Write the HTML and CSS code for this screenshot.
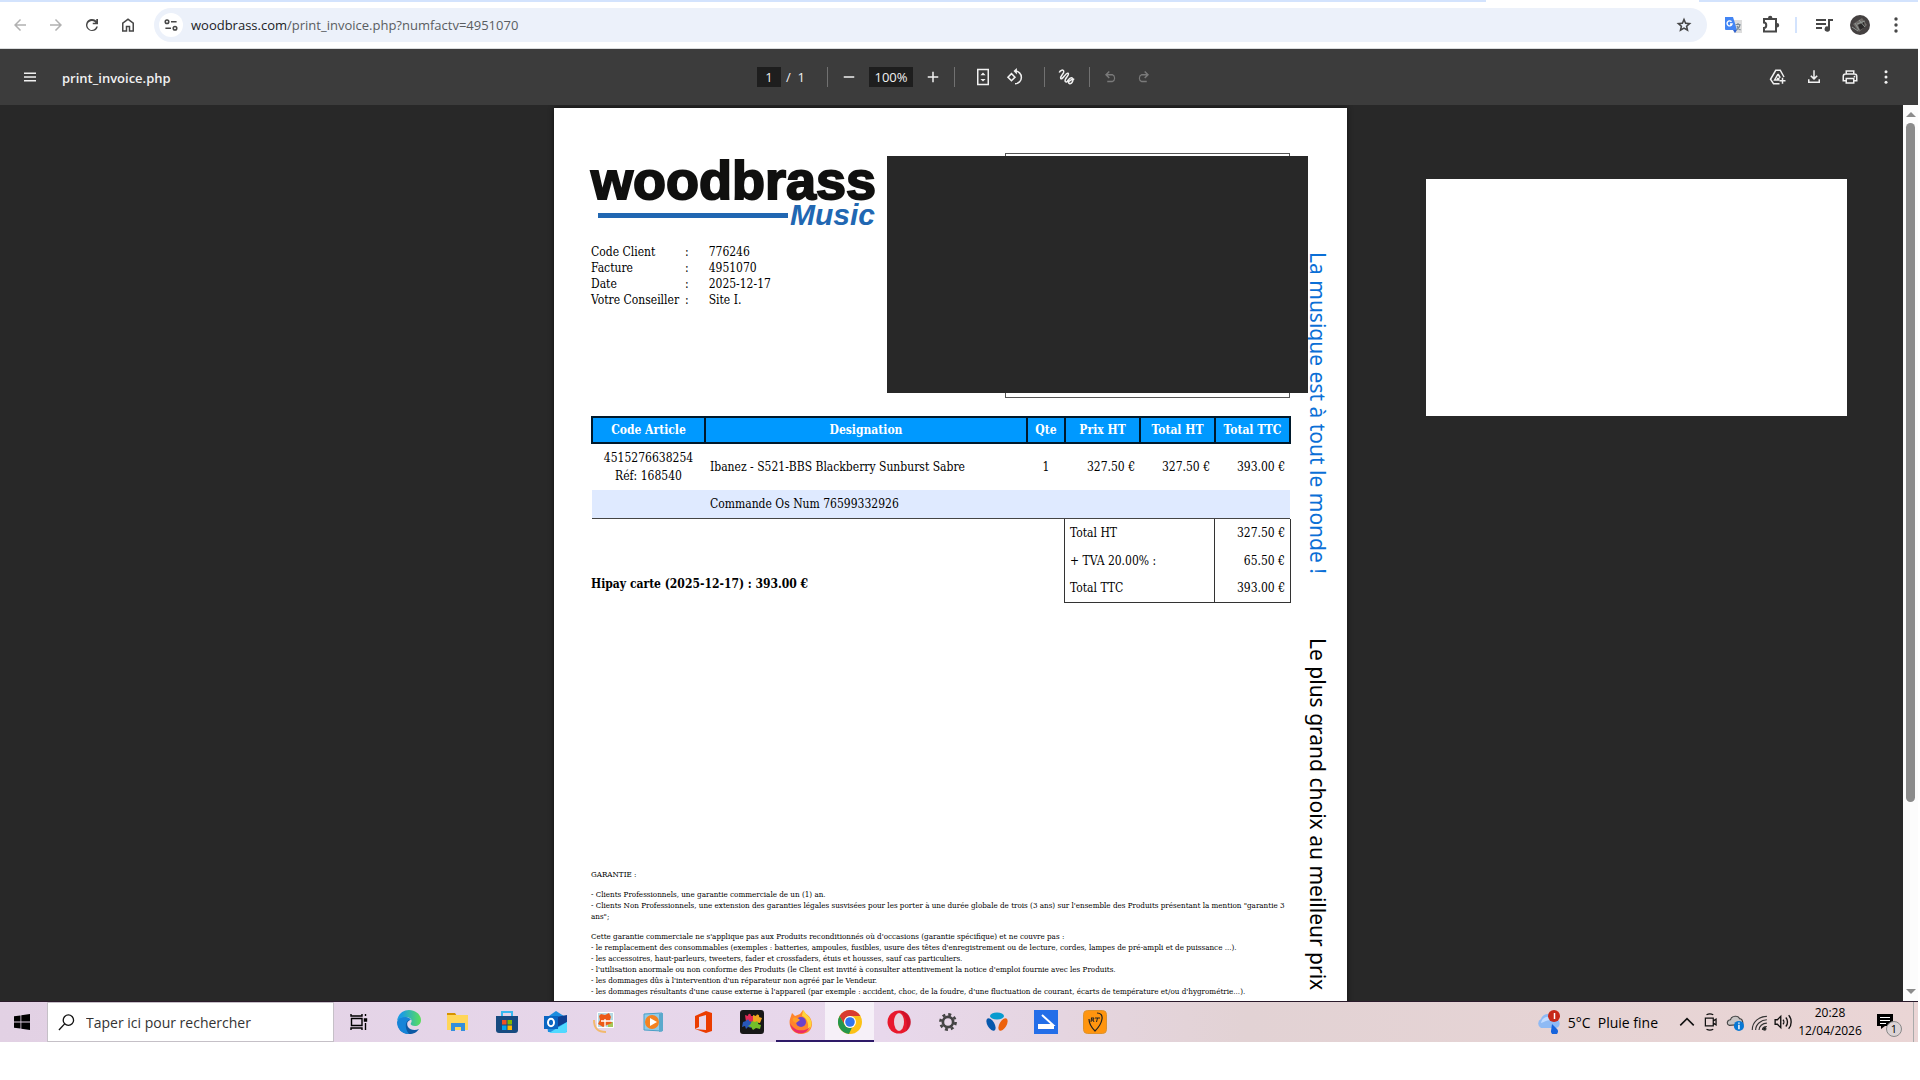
FILE: index.html
```html
<!DOCTYPE html>
<html lang="fr">
<head>
  <meta charset="UTF-8">
  <meta name="viewport" content="width=device-width, initial-scale=1.0">
  <title>print_invoice.php</title>
  <link rel="stylesheet" href="styles.css">
</head>
<body>

  <!-- Browser bar -->
  <div class="tabs"><span class="tab-left"></span><span class="tab-active"></span><span class="tab-right"></span></div>
  <nav class="browser">
    <button class="nav off" aria-label="Retour"><svg viewBox="0 0 24 24"><path d="M20 11H7.8l5.6-5.6L12 4l-8 8 8 8 1.4-1.4L7.800 13H20z"/></svg></button>
    <button class="nav off" aria-label="Avancer"><svg viewBox="0 0 24 24"><path d="M12 4l-1.4 1.4 5.6 5.6H4v2h12.2l-5.6 5.6L12 20l8-8z"/></svg></button>
    <button class="nav" aria-label="Actualiser"><svg viewBox="0 0 24 24"><path d="M12 20a8 8 0 1 1 5.700-13.600V4H20v7h-7V9h3.700A6 6 0 1 0 17.700 14h2.100A8 8 0 0 1 12 20z"/></svg></button>
    <button class="nav" aria-label="Accueil"><svg viewBox="0 0 24 24"><path d="M6 19h3v-6h6v6h3v-9l-6-4.500L6 10zm-2 2V9l8-6 8 6v12h-7v-6h-2v6z"/></svg></button>
    <div class="address">
      <button class="site" aria-label="Informations sur le site"><svg viewBox="0 0 20 20" fill="none" stroke="currentColor" stroke-width="2"><circle cx="5" cy="6" r="2.200"/><path d="M10 6h7M3 14h7"/><circle cx="15" cy="14" r="2.200"/></svg></button>
      <span class="url"><b>woodbrass.com</b>/print_invoice.php?numfactv=4951070</span>
      <button class="star" aria-label="Favori"><svg viewBox="0 0 24 24"><path d="M8.900 16.800l3.100-1.900 3.100 1.900-.8-3.500 2.700-2.400-3.600-.3L12 7.300l-1.400 3.300-3.600.3 2.700 2.400zM5.800 21l1.600-7L2 9.200l7.200-.6L12 2l2.800 6.600 7.200.6-5.400 4.800 1.600 7-6.200-3.700z"/></svg></button>
    </div>
    <div class="extensions">
      <button class="translate" aria-label="Traduire"><svg viewBox="0 0 18 18"><path fill="#ddd" d="M7 4h11v13H10z"/><path fill="#4285f4" d="M1 1h8l4 13H2a1 1 0 0 1-1-1z"/><path fill="#2b5fd0" d="M9 14h4l-2 3z"/><path fill="none" stroke="#7b8b96" stroke-width="1.200" d="M11.500 8.500h5M14 7v2M16 9c-.5 2-2 4-3.500 5M13 10c1 2 2 3 3.500 4"/><path fill="none" stroke="#fff" stroke-width="1.400" d="M7.500 5.800A2.500 2.500 0 1 0 8 8H6"/></svg></button>
      <button class="puzzle" aria-label="Extensions"><svg viewBox="0 0 20 20"><path fill="none" stroke="currentColor" stroke-width="2" d="M3 4h12v12.500H3V13c3 0 3-5.500 0-5.500z"/><path d="M7 3a2.200 2.200 0 0 1 4.400 0zM16 8a2.200 2.200 0 0 1 0 4.400z"/></svg></button>
      <span class="pipe"></span>
      <button aria-label="Médias"><svg viewBox="0 0 20 20"><path d="M2 4h10v2H2zM2 8h10v2H2zM2 12h6v2H2zM14 4h5v2h-3v8a2.700 2.700 0 1 1-2-2.600z"/></svg></button>
      <button class="avatar" aria-label="Profil"><svg viewBox="0 0 20 20"><circle cx="10" cy="10" r="10" fill="#454141"/><path fill="#6f6b68" d="M3 9l9-6 5 7-8 7z"/><path fill="#2b2929" d="M8 10l6-3 1 5-5 3z"/><path stroke="#8f9692" fill="none" d="M5 8l4 7M9 5l6 7M2 12l6 4M7 9l8-3"/></svg></button>
      <button class="more" aria-label="Menu"><svg viewBox="0 0 20 20"><circle cx="10" cy="4" r="1.700"/><circle cx="10" cy="10" r="1.700"/><circle cx="10" cy="16" r="1.700"/></svg></button>
    </div>
  </nav>

  <!-- PDF toolbar -->
  <header class="pdfbar">
    <div class="pdf-title">
      <button aria-label="Menu latéral"><svg viewBox="0 0 24 24"><path d="M4 6h16v2H4zM4 11h16v2H4zM4 16h16v2H4z"/></svg></button>
      <h1>print_invoice.php</h1>
    </div>
    <div class="pdf-tools">
      <input class="page-no" value="1" aria-label="Page"><span class="of">/&nbsp; 1</span>
      <i></i>
      <button aria-label="Zoom arrière"><svg viewBox="0 0 24 24"><path d="M5 11h14v2H5z"/></svg></button>
      <input class="zoom" value="100%" aria-label="Zoom">
      <button aria-label="Zoom avant"><svg viewBox="0 0 24 24"><path d="M5 11h6V5h2v6h6v2h-6v6h-2v-6H5z"/></svg></button>
      <i></i>
      <button class="fit" aria-label="Ajuster"><svg viewBox="0 0 24 24"><path fill="none" stroke="currentColor" stroke-width="2" d="M5 2h14v20H5z"/><path d="M12 6l3.500 3.500h-7zM12 18l3.500-3.500h-7z"/></svg></button>
      <button class="rotate" aria-label="Pivoter"><svg viewBox="0 0 24 24"><path fill="none" stroke="currentColor" stroke-width="2" d="M7.300 7.500L12 12.200l-4.700 4.700-4.700-4.700zM12 4a8.500 8.500 0 1 1 0 17"/><path d="M14.500 0v8.500L10 4z"/></svg></button>
      <i></i>
      <button class="draw" aria-label="Dessiner"><svg viewBox="0 0 24 24"><path fill="none" stroke="currentColor" stroke-width="2" d="M3 6c1-3 6-5 6-1 0 3-5 5-4 9 2 3 7-9 10-7 2 3-6 7-4 11 3 3 4-5 8-5 5 1 1 8-2 8-4-1 0-6 6-6"/></svg></button>
      <i></i>
      <button class="off" aria-label="Annuler"><svg viewBox="0 0 24 24"><path d="M7 19v-2h7a4 4 0 0 0 0-7H7.800l2.600 2.600L9 14 4 9l5-5 1.400 1.400L7.800 8H14a6 6 0 0 1 0 11z"/></svg></button>
      <button class="off" aria-label="Rétablir"><svg viewBox="0 0 24 24"><path d="M17 19v-2h-7a4 4 0 0 1 0-7h6.200l-2.600 2.600L15 14l5-5-5-5-1.400 1.400L16.200 8H10a6 6 0 0 0 0 11z"/></svg></button>
    </div>
    <div class="pdf-actions">
      <button aria-label="Enregistrer dans Drive"><svg viewBox="0 0 24 24"><path fill="none" stroke="currentColor" stroke-width="2" d="M14 21H6l-4-6L9 3h6l5 9M12 8l-4.500 8H14M12 8l3 5M10.500 14h3.500"/><path d="M17 13h2v3h3v2h-3v3h-2v-3h-3v-2h3z"/></svg></button>
      <button aria-label="Télécharger"><svg viewBox="0 0 24 24"><path d="M12 16l-5-5 1.400-1.500 2.600 2.600V3h2v9.100l2.600-2.600L17 11zM4 20v-5h2v3h12v-3h2v5z"/></svg></button>
      <button aria-label="Imprimer"><svg viewBox="0 0 24 24"><path fill="none" stroke="currentColor" stroke-width="2" d="M7 8V4h10v4M7 17H3v-6a3 3 0 0 1 3-3h12a3 3 0 0 1 3 3v6h-4M7 14h10v6H7z"/><circle cx="18" cy="11.500" r="1.200"/></svg></button>
      <button aria-label="Plus"><svg viewBox="0 0 24 24"><circle cx="12" cy="5" r="2"/><circle cx="12" cy="12" r="2"/><circle cx="12" cy="19" r="2"/></svg></button>
    </div>
  </header>

  <!-- Document -->
  <main class="viewer">
    <div class="canvas">
      <article class="page">
        <div class="content">
          <div class="top">
            <div class="sender">
              <div class="logo">
                <div class="brand">woodbrass</div>
                <div class="rule"></div>
                <div class="music">Music</div>
              </div>
              <table class="client">
                <tr><th>Code Client</th><td>:</td><td>776246</td></tr>
                <tr><th>Facture</th><td>:</td><td>4951070</td></tr>
                <tr><th>Date</th><td>:</td><td>2025-12-17</td></tr>
                <tr><th>Votre Conseiller</th><td>:</td><td>Site I.</td></tr>
              </table>
            </div>
            <div class="recipient"><div class="mask"></div></div>
          </div>

          <table class="items">
            <colgroup><col class="c-code"><col><col class="c-qty"><col class="c-price"><col class="c-price"><col class="c-price"></colgroup>
            <thead>
              <tr><th>Code Article</th><th>Designation</th><th>Qte</th><th>Prix HT</th><th>Total HT</th><th>Total TTC</th></tr>
            </thead>
            <tbody>
              <tr><td class="mid">4515276638254<br>Réf: 168540</td><td>Ibanez - S521-BBS Blackberry Sunburst Sabre</td><td class="mid">1</td><td class="num">327.50 €</td><td class="num">327.50 €</td><td class="num">393.00 €</td></tr>
              <tr class="order"><td></td><td colspan="5">Commande Os Num 76599332926</td></tr>
            </tbody>
          </table>

          <div class="bottom">
            <p class="payment">Hipay carte (2025-12-17) : 393.00 €</p>
            <table class="totals">
              <tr><th>Total HT</th><td>327.50 €</td></tr>
              <tr><th>+ TVA 20.00% :</th><td>65.50 €</td></tr>
              <tr><th>Total TTC</th><td>393.00 €</td></tr>
            </table>
          </div>

          <div class="warranty">
            <p>GARANTIE :</p>
            <p>- Clients Professionnels, une garantie commerciale de un (1) an.<br>
              - Clients Non Professionnels, une extension des garanties légales susvisées pour les porter à une durée globale de trois (3 ans) sur l'ensemble des Produits présentant la mention "garantie 3<br>ans";</p>
            <p>Cette garantie commerciale ne s'applique pas aux Produits reconditionnés où d'occasions (garantie spécifique) et ne couvre pas :<br>
              - le remplacement des consommables (exemples : batteries, ampoules, fusibles, usure des têtes d'enregistrement ou de lecture, cordes, lampes de pré-ampli et de puissance ...).<br>
              - les accessoires, haut-parleurs, tweeters, fader et crossfaders, étuis et housses, sauf cas particuliers.<br>
              - l'utilisation anormale ou non conforme des Produits (le Client est invité à consulter attentivement la notice d'emploi fournie avec les Produits.<br>
              - les dommages dûs à l'intervention d'un réparateur non agréé par le Vendeur.<br>
              - les dommages résultants d'une cause externe à l'appareil (par exemple : accident, choc, de la foudre, d'une fluctuation de courant, écarts de température et/ou d'hygrométrie...).</p>
          </div>
        </div>
        <aside class="slogan"><span>La musique est à tout le monde !</span><span>Le plus grand choix au meilleur prix</span></aside>
      </article>
      <div class="blank"></div>
    </div>
    <div class="scrollbar"><span class="up"></span><span class="thumb"></span><span class="down"></span></div>
  </main>

  <!-- Windows taskbar -->
  <footer class="taskbar">
    <button class="start" aria-label="Démarrer"><svg viewBox="0 0 16 16"><path d="M0 2.300l6.500-.9v6.100H0zM7.300 1.300L16 0v7.500H7.300zM0 8.400h6.500v6.100L0 13.700zM7.300 8.400H16V16l-8.700-1.300z"/></svg></button>
    <label class="search">
      <svg viewBox="0 0 18 18" fill="none" stroke="#111" stroke-width="1.400"><circle cx="11" cy="6.500" r="5.500"/><path d="M7 10.500L1 17"/></svg>
      <input type="text" placeholder="Taper ici pour rechercher" aria-label="Rechercher">
    </label>
    <div class="apps">
      <button class="small" aria-label="Vue des tâches"><svg viewBox="0 0 18 18" fill="none" stroke="#000" stroke-width="1.400"><path d="M1.500 5.500h10.500v7H1.500zM1 1v2h11V1M1 17v-2h11v2M15.500 1v2M15.500 10v7"/><path fill="#000" d="M14.500 6h2v2h-2z"/></svg></button>
      <button aria-label="Edge"><svg viewBox="0 0 24 24"><defs><linearGradient id="edge" x1="0" x2="1"><stop offset=".2" stop-color="#1b9de2"/><stop offset="1" stop-color="#5be05a"/></linearGradient></defs><path fill="#0c59a4" d="M2 8c-4 8 2 16 10 16 5 0 8-2 10-5-4 2-9 1-11-2-2-4 0-6 2-7z"/><path fill="#1684d8" d="M0 12c1-4 5-6 9-5 2 0 4 1 5 3-6-1-7 8-2 14C5 24 0 19 0 12z"/><path fill="url(#edge)" d="M0 11C1 4 6 0 12 0c7 0 12 5 12 10 0 4-3 6-6 6-4 0-5-2-4-3 2-3-1-6-5-6-4 0-7 1-9 4z"/></svg></button>
      <button aria-label="Explorateur"><svg viewBox="0 0 24 24"><path fill="#d69200" d="M1 3h8l2 3H1z"/><path fill="#ffd65a" d="M1 5h21v15H1z"/><path fill="#338fdc" d="M5 13h14v8h-4v-4H9v4H5z"/></svg></button>
      <button aria-label="Store"><svg viewBox="0 0 24 24"><path fill="none" stroke="#38b8f0" stroke-width="2" d="M7 7V2h10v5"/><path fill="#174a80" d="M1 6h22v14a3 3 0 0 1-3 3H4a3 3 0 0 1-3-3z"/><path fill="#f25022" d="M7 10h4.500v4.500H7z"/><path fill="#7fba00" d="M12.500 10H17v4.500h-4.500z"/><path fill="#00a4ef" d="M7 15.500h4.500V20H7z"/><path fill="#ffb900" d="M12.500 15.500H17V20h-4.500z"/></svg></button>
      <button aria-label="Outlook"><svg viewBox="0 0 24 24"><path fill="#1c8ddf" d="M2 8l10-7 11 7v14H4z"/><path fill="#103f91" d="M12 7l11-2v7l-10 5z"/><path fill="#50d9ff" d="M5 23l18-11v9a2 2 0 0 1-2 2z"/><path fill="#0a65c2" d="M0 6h14v13H0z"/><ellipse cx="7" cy="12.500" rx="3" ry="3.800" fill="none" stroke="#fff" stroke-width="2"/></svg></button>
      <button aria-label="Photos"><svg viewBox="0 0 24 24"><path fill="#b5d9e4" d="M5 3h15v14H5z"/><path fill="#a6c85b" d="M15 12h5v5h-5z"/><path fill="#ed5a18" d="M8 4l4 1 4-2 2 4-1 3 2 3-5 2-4 2-5-3 2-4-1-4z"/><path fill="none" stroke="#fff" d="M4.500 2.500h16v15h-16z"/><path fill="none" stroke="#fff" stroke-width="1.300" d="M12 9v8M8 11h12"/><path fill="none" stroke="#f2b96d" stroke-width="2" d="M1 10c0 8 3 12 12 12"/></svg></button>
      <button aria-label="Lecteur multimédia"><svg viewBox="0 0 24 24"><path fill="#8fcbe8" stroke="#4a9fc7" d="M2 4l18-1v18L2 20z"/><path fill="#5ba9cc" d="M17 4l4-1v18l-4 1z"/><circle cx="10" cy="12" r="7" fill="#f58220"/><path fill="#fff" d="M8 8l7 4-7 4z"/></svg></button>
      <button aria-label="Office"><svg viewBox="0 0 24 24"><path fill="#eb3c00" d="M4 6l11-5 6 2v18l-6 2-11-4 11 1V5L8 7v10l-4 2z"/></svg></button>
      <button aria-label="Puzzle"><svg viewBox="0 0 24 24"><rect width="24" height="24" rx="3" fill="#171717"/><path fill="#e12b55" d="M5 5l3 1c0-3 3-3 3 0h3l-1 6H6z"/><path fill="#f1a51e" d="M13 5l3 1c1-3 4-1 3 1l3 1-2 5-7-1z"/><path fill="#2857b8" d="M3 12l3-1c1-2 3-2 3 0l3 1-1 6-3-1-2 2-1-3-3 1z"/><path fill="#73be29" d="M12 11l3 1c2-2 4 0 3 2l3 1-1 4-4-1-3 2-2-3-3-1 2-1z"/></svg></button>
      <button class="open" aria-label="Firefox"><svg viewBox="0 0 24 24"><path fill="#ff842b" d="M1 9l2-6 3 3 5-2 3-4 3 4c9 5 8 20-5 20C4 24-1 16 1 9z"/><path fill="#ffd43b" d="M14 0l4 5c7 6 5 13 0 16 3-6 0-13-5-15z"/><path fill="#ec2c66" d="M1 13c4 9 15 9 20 4-4 9-18 9-20-4z"/><circle cx="12" cy="12" r="5" fill="#6c42ca"/><path fill="#ff9d27" d="M4 8c3-1 5 0 7 2l-4 3c-3-1-4-3-3-5z"/></svg></button>
      <button class="open current" aria-label="Chrome"><svg viewBox="0 0 24 24"><circle cx="12" cy="12" r="12" fill="#fbc116"/><path fill="#d93b30" d="M1.600 6A12 12 0 0 1 22.400 6H12a6 6 0 0 0-5.200 9z"/><path fill="#24964b" d="M1.600 6l5.200 9A6 6 0 0 0 14 17.600L11 24A12 12 0 0 1 1.600 6z"/><circle cx="12" cy="12" r="6" fill="#fff"/><circle cx="12" cy="12" r="4.800" fill="#3276ed"/></svg></button>
      <button aria-label="Opera"><svg viewBox="0 0 24 24"><circle cx="12" cy="12" r="11.500" fill="#e8192c"/><ellipse cx="12" cy="12" rx="5" ry="9" fill="#e6d5de"/><path fill="#b80c25" d="M12 .5c12 0 16 15 7 21 2-7 1-16-7-21z" opacity=".5"/></svg></button>
      <button class="small" aria-label="Paramètres"><svg viewBox="0 0 20 20" fill="none" stroke="#444"><circle cx="10" cy="10" r="5.700" stroke-width="3"/><circle cx="10" cy="10" r="8.400" stroke-width="3" stroke-dasharray="3.300 3.300"/></svg></button>
      <button aria-label="Bouygues"><svg viewBox="0 0 24 24"><ellipse cx="12" cy="6" rx="7" ry="3.500" fill="#079bcf"/><ellipse cx="6" cy="14.500" rx="3.500" ry="7" fill="#0758ad" transform="rotate(-30 6 14.500)"/><ellipse cx="18" cy="14.500" rx="3.500" ry="7" fill="#ed610b" transform="rotate(30 18 14.500)"/></svg></button>
      <button aria-label="Scanner"><svg viewBox="0 0 24 24"><path fill="#236ee8" d="M0 0h24v24H0z"/><path fill="none" stroke="#fff" stroke-width="2" d="M8 5l11 10H4"/><path fill="#fff" d="M4 15h16v4H4z"/></svg></button>
      <button aria-label="RT"><svg viewBox="0 0 24 24"><rect x=".5" y=".5" width="23" height="23" rx="4" fill="#ff950f" stroke="#dd922d"/><path fill="none" stroke="#222" stroke-width="1.200" d="M14 3c8 0 6 10-2 18-4-4-6-8-6-12"/><path fill="none" stroke="#222" d="M8 8h3l-1 2H8.500M8.500 8L8 12M10 10l1 2M12 8h5M14.500 8l-1 4"/></svg></button>
    </div>
    <div class="tray">
      <button class="weather"><svg viewBox="0 0 24 24"><path fill="#8fbaf4" d="M5 18a5 5 0 0 1 0-9C7 3 15 2 17 8c8 0 9 10 2 10z"/><path fill="#c4dcff" d="M5 13c1-7 10-9 12-2-5-2-8 1-12 2z"/><path fill="#1764dc" d="M16 14l5 5a3.500 3.500 0 1 1-6 2z"/><circle cx="18" cy="6" r="6" fill="#c62819"/><path stroke="#fff" stroke-width="1.500" d="M18.500 3v6" /></svg><span>5°C&nbsp; Pluie fine</span></button>
      <button aria-label="Icônes cachées"><svg viewBox="0 0 16 16" fill="none" stroke="#111" stroke-width="1.400"><path d="M2 11l6-6 6 6"/></svg></button>
      <button aria-label="Caméra"><svg viewBox="0 0 16 16" fill="none" stroke="#111" stroke-width="1.100"><path d="M3 4.500h7v7H3zM10 7l2.500-1.500v5L10 9M4 1.500c2-1 4-1 6 0M4 14.500c2 1 4 1 6 0"/></svg></button>
      <button aria-label="OneDrive"><svg viewBox="0 0 16 16"><path fill="#c8c4c4" stroke="#444" d="M3 11C0 10 1 6 4 6c1-4 7-4 8-1 3 0 3 3 3 5z"/><circle cx="11.500" cy="11.500" r="4.500" fill="#0878d4"/><path stroke="#fff" stroke-width="1.300" d="M11.500 10.500v4M11.500 8.500v1"/></svg></button>
      <button aria-label="Wi-Fi"><svg viewBox="0 0 16 16" fill="none" stroke="#333"><path d="M2 15C2 8 8 3 15 3M5 15c0-5 5-9 10-9M8 15c0-3 3-6 7-6M11 15c0-2 2-3 4-3"/><circle cx="13" cy="14" r="1.200" fill="#111"/></svg></button>
      <button aria-label="Volume"><svg viewBox="0 0 16 16" fill="none" stroke="#111" stroke-width="1.200"><path d="M1 6h2l3-3v10l-3-3H1zM8 6c1 1 1 3 0 4M10.500 4c2 2 2 6 0 8M13 2c3 3 3 9 0 12"/></svg></button>
      <button class="clock"><span>20:28</span><span>12/04/2026</span></button>
      <button class="notice" aria-label="Notifications"><svg viewBox="0 0 16 16"><path d="M0 0h16v12H8l-4 3v-3H0z"/><path stroke="#fff" d="M3 3.500h10M3 6.500h10M3 9.500h6"/></svg><b>1</b></button>
      <span class="desktop"></span>
    </div>
  </footer>

</body>
</html>
```

FILE: styles.css
```css
* { box-sizing: border-box; }
body { margin: 0 2px 0 0; height: calc(100vh - 38px); display: flex; flex-direction: column; overflow: hidden; background: #fff; color: #000; font-family: "Open Sans", sans-serif; }
button { display: flex; align-items: center; justify-content: center; flex: none; padding: 0; border: 0; background: none; color: inherit; font: inherit; }
button svg { display: block; width: 20px; height: 20px; fill: currentColor; }
button svg[fill="none"] { fill: none; }
input { border: 0; padding: 0; font: inherit; color: inherit; }
p, h1 { margin: 0; }
table { border-collapse: collapse; }

/* browser bar */
.tabs { display: flex; height: 2px; }
.tab-left { flex: 1; background: #d3e3fd; }
.tab-active { width: 213px; }
.tab-right { width: 219px; background: #d3e3fd; }
.browser { display: flex; align-items: center; height: 47px; padding: 0 9px 0 2px; border-bottom: 1px solid #dadcdd; color: #474747; }
.nav { width: 36px; height: 36px; }
.nav svg { width: 18px; height: 18px; }
.nav.off { color: #b1b1b1; }
.address { display: flex; flex: 1; align-items: center; height: 34px; margin-left: 8px; padding: 0 14px 0 5px; border-radius: 17px; background: #ecf1fa; }
.site { width: 24px; height: 24px; border-radius: 12px; background: #fff; }
.site svg { width: 16px; height: 16px; }
.url { flex: 1; margin-left: 8px; font-size: 13px; color: #5a5d61; }
.url b { font-weight: 400; color: #202124; }
.star svg { width: 18px; height: 18px; }
.extensions { display: flex; align-items: center; margin-left: 16px; }
.extensions button { width: 20px; margin-right: 16px; }
.extensions .translate { margin-right: 18px; }
.extensions .translate svg { width: 18px; height: 18px; }
.extensions .puzzle { margin-right: 13px; }
.extensions .more { margin-right: 3px; }
.pipe { width: 2px; height: 16px; margin: 0 17px 0 1px; background: #d3e3fd; }

/* pdf toolbar */
.pdfbar { display: grid; grid-template-columns: 1fr auto 1fr; align-items: center; height: 56px; flex: none; background: #3c3c3c; color: #f1f1f1; }
.pdfbar svg { width: 18px; height: 18px; }
.pdf-title { display: flex; align-items: center; padding-left: 21px; }
.pdf-title h1 { margin-left: 23px; padding-top: 1px; font-size: 13px; font-weight: 600; }
.pdf-tools { display: flex; align-items: center; padding-right: 2px; font-size: 13px; }
.pdf-tools button { width: 32px; height: 32px; }
.pdf-tools .off { color: #7a7a7a; }
.pdf-tools i { width: 1px; height: 20px; background: #717171; margin: 0 5px; }
.pdf-tools input { height: 20px; background: #1e1e1e; text-align: center; }
.page-no { width: 24px; }
.of { width: 41px; padding-left: 5px; }
.zoom { width: 44px; margin: 0 4px; }
.pdf-tools .fit { margin-left: 7px; }
.pdf-tools .rotate { margin-right: 8px; }
.pdf-tools .draw { margin-right: 2px; }
.pdf-actions { display: flex; justify-content: flex-end; padding-right: 22px; gap: 16px; }
.pdf-actions button { width: 20px; }

/* document */
.viewer { display: flex; flex: 1; min-height: 0; background: #282828; border-bottom: 1px solid #2a1a2b; }
.canvas { position: relative; display: flex; flex: 1; justify-content: center; align-items: flex-start; padding: 3px 2px 0 0; overflow: hidden; }
.page { display: flex; width: 793px; min-height: 1122px; padding: 45px 0 38px 37px; background: #fff; box-shadow: 0 0 5px #111; font-family: "DejaVu Serif Condensed", "DejaVu Serif", serif; font-size: 12px; }
.content { flex: none; width: 700px; }
.top { display: flex; justify-content: space-between; padding-right: 1px; }
.logo { position: relative; height: 74px; margin-bottom: 17px; width: 284px; }
.brand { padding-top: 2px; font: bold 54px/50px "Liberation Sans", sans-serif; color: #10100f; -webkit-text-stroke: 2px #10100f; }
.rule { position: absolute; left: 7px; top: 60px; width: 190px; height: 5px; background: #2167b2; }
.music { position: absolute; right: 0; bottom: 0; font: italic bold 30px/24px "Liberation Sans", sans-serif; color: #2167b2; }
.client { font-size: 12px; line-height: 16px; }
.client th { width: 94px; padding: 0; text-align: left; font-weight: 400; white-space: nowrap; }
.client td { padding: 0 20px 0 0; }
.recipient { position: relative; width: 285px; height: 245px; border: 1px solid #555; }
.mask { position: absolute; top: 2px; right: -19px; width: 421px; height: 237px; background: #282828; }
.items { width: 100%; margin-top: 18px; table-layout: fixed; border-bottom: 1px solid #444; }
.c-code { width: 113px; }
.c-qty { width: 38px; }
.c-price { width: 75px; }
.items th { height: 26px; padding: 0; border: 2px solid #00192b; background: #09f; color: #fff; font-weight: 700; }
.items td { height: 28px; padding: 0 5px; }
.items tbody tr:first-child td { height: 47px; line-height: 18px; }
.items .mid { text-align: center; }
.items .num { text-align: right; }
.order { background: #dfeaff; }
.bottom { display: flex; justify-content: space-between; align-items: flex-end; }
.payment { padding-bottom: 12px; font-weight: 700; }
.totals { width: 227px; border: 1px solid #333; border-top: 0; }
.totals th, .totals td { height: 28px; padding: 0 5px; font-weight: 400; text-align: left; }
.totals td { width: 76px; border-left: 1px solid #333; text-align: right; }
.warranty { margin-top: 266px; font-size: 8px; line-height: 11px; white-space: nowrap; }
.warranty p { margin-bottom: 9px; }
.slogan { display: flex; gap: 64px; margin: 99px 0 0 14px; writing-mode: vertical-rl; font: 21px/26px "Noto Sans", sans-serif; white-space: nowrap; }
.slogan span:first-child { color: #0b6fd6; }
.blank { position: absolute; top: 74px; right: 56px; width: 421px; height: 237px; background: #fff; }
.scrollbar { display: flex; flex-direction: column; align-items: center; width: 15px; padding: 7px 0; background: #fcfcfc; }
.up, .down { border: 5px solid transparent; border-top: 0; border-bottom-color: #8b8b8b; }
.down { border-top: 5px solid #8b8b8b; border-bottom: 0; margin-top: auto; }
.thumb { width: 9px; height: 77%; margin-top: 6px; border-radius: 5px; background: #8b8b8b; }

/* taskbar */
.taskbar { display: flex; height: 40px; flex: none; background: linear-gradient(90deg, #e2d1e4, #e8d8ec 46%, #e2d2d4 65%, #ead5d5); }
.start { width: 47px; padding-right: 3px; }
.start svg { width: 16px; height: 16px; }
.search { display: flex; align-items: center; width: 287px; padding-left: 10px; background: #fff; border: 1px solid #c5c0c7; }
.search svg { width: 17px; height: 17px; }
.search input { flex: 1; min-width: 0; margin-left: 11px; background: none; font-size: 14px; outline: 0; }
.search input::placeholder { color: #333; opacity: 1; }
.apps { display: flex; }
.apps button { width: 49px; height: 40px; border-bottom: 2px solid transparent; border-top: 2px solid transparent; }
.apps button svg { width: 24px; height: 24px; }
.apps .small svg { width: 18px; height: 18px; }
.apps .small:first-child { margin-right: 1px; }
.apps .open { border-bottom-color: #2e1a68; }
.apps .current { background: #f6f0f8; }
.tray { display: flex; align-items: center; margin-left: auto; }
.tray button { width: 24px; }
.tray button svg { width: 18px; height: 18px; }
.tray .weather { width: auto; margin-right: 17px; font-size: 14px; }
.tray .weather svg { width: 24px; height: 24px; margin-right: 8px; }
.tray .clock { width: 70px; flex-direction: column; font-size: 12px; line-height: 18px; }
.tray .notice { position: relative; width: 40px; }
.tray .notice svg { width: 16px; height: 16px; }
.notice b { position: absolute; top: 7px; right: 3px; width: 16px; height: 16px; border: 1px solid #888; border-radius: 8px; background: #dcd3d5; font-size: 11px; line-height: 14px; font-weight: 400; }
.desktop { width: 5px; height: 40px; margin-left: 8px; border-left: 1px solid #aaa; }
```
